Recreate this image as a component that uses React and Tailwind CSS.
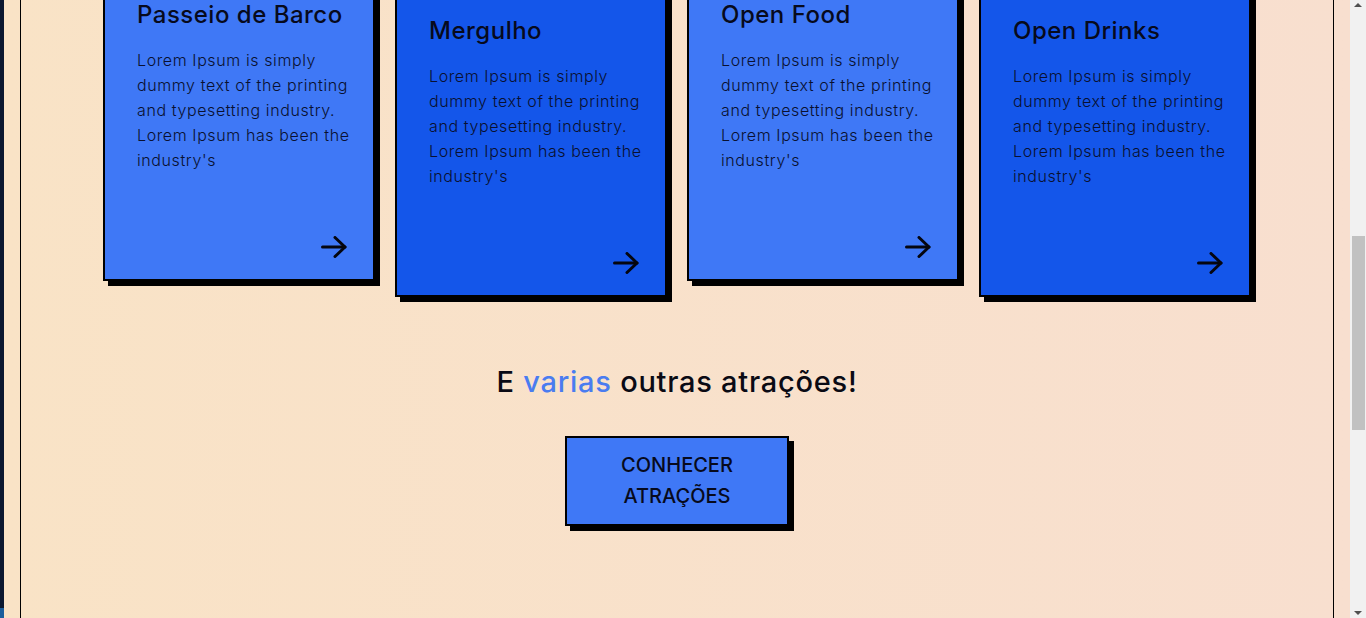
import React from 'react';

const cards = [
  { title: 'Passeio de Barco', tone: 'light' },
  { title: 'Mergulho', tone: 'dark' },
  { title: 'Open Food', tone: 'light' },
  { title: 'Open Drinks', tone: 'dark' },
];

const lorem =
  "Lorem Ipsum is simply dummy text of the printing and typesetting industry. Lorem Ipsum has been the industry's";

function Arrow() {
  return (
    <svg width="26" height="22" viewBox="0 0 26 22" fill="none" stroke="#05060f" strokeWidth="3" strokeLinecap="round" strokeLinejoin="round">
      <path d="M1.5 11H24" />
      <path d="M14 1.5L24 11L14 20.5" />
    </svg>
  );
}

function Card({ title, tone }) {
  return (
    <div
      className={`flex h-[318px] w-[272px] shrink-0 flex-col border-2 border-black px-8 pt-8 pb-[21px] shadow-[5px_5px_0_#000] ${
        tone === 'light' ? 'bg-[#3f78f6]' : 'mt-4 bg-[#1456ea]'
      }`}
    >
      <h3 className="text-[24px] leading-[36px] font-medium tracking-[0.5px] whitespace-nowrap text-[#070a1c]">{title}</h3>
      <p className="mt-[15px] -mr-3 text-[16px] leading-[25px] font-light tracking-[0.6px] text-[#091030]">{lorem}</p>
      <div className="mt-auto -mr-[6px] flex justify-end">
        <Arrow />
      </div>
    </div>
  );
}

function Scrollbar() {
  return (
    <div className="flex w-4 shrink-0 flex-col items-center bg-[#f1f1f1]">
      <div className="mt-[3px] h-0 w-0 border-x-[4px] border-b-[4px] border-x-transparent border-b-[#505050]" />
      <div className="mt-[229px] h-[194px] w-[13px] bg-[#c1c1c1]" />
      <div className="mt-auto mb-[3px] h-0 w-0 border-x-[4px] border-t-[4px] border-x-transparent border-t-[#505050]" />
    </div>
  );
}

export default function App() {
  return (
    <div className="flex h-[618px] w-full overflow-hidden font-['Inter','Open_Sans',sans-serif]">
      <div className="flex w-[4px] shrink-0 flex-col bg-[#0b1830]">
        <div className="mt-auto h-[10px] bg-[#1b5e9c]" />
      </div>
      <div className="flex flex-1 bg-gradient-to-r from-[#f9e3c6] to-[#f8dfcf] px-4">
        <div className="flex flex-1 flex-col items-center overflow-hidden border-x border-black">
          <div className="-mt-[37px] flex items-start justify-center gap-5">
            {cards.map((c) => (
              <Card key={c.title} {...c} />
            ))}
          </div>
          <h2 className="mt-[64px] text-[29px] leading-[42px] font-medium tracking-[0.75px] text-[#0a0a14]">
            E <span className="text-[#4a7cf0]">varias</span> outras atrações!
          </h2>
          <button className="mt-[33px] w-[224px] border-2 border-black bg-[#3f78f6] py-3 text-[20px] leading-[31px] font-medium text-[#070a1c] shadow-[5px_5px_0_#000]">
            CONHECER
            <br />
            ATRAÇÕES
          </button>
        </div>
      </div>
      <Scrollbar />
    </div>
  );
}
